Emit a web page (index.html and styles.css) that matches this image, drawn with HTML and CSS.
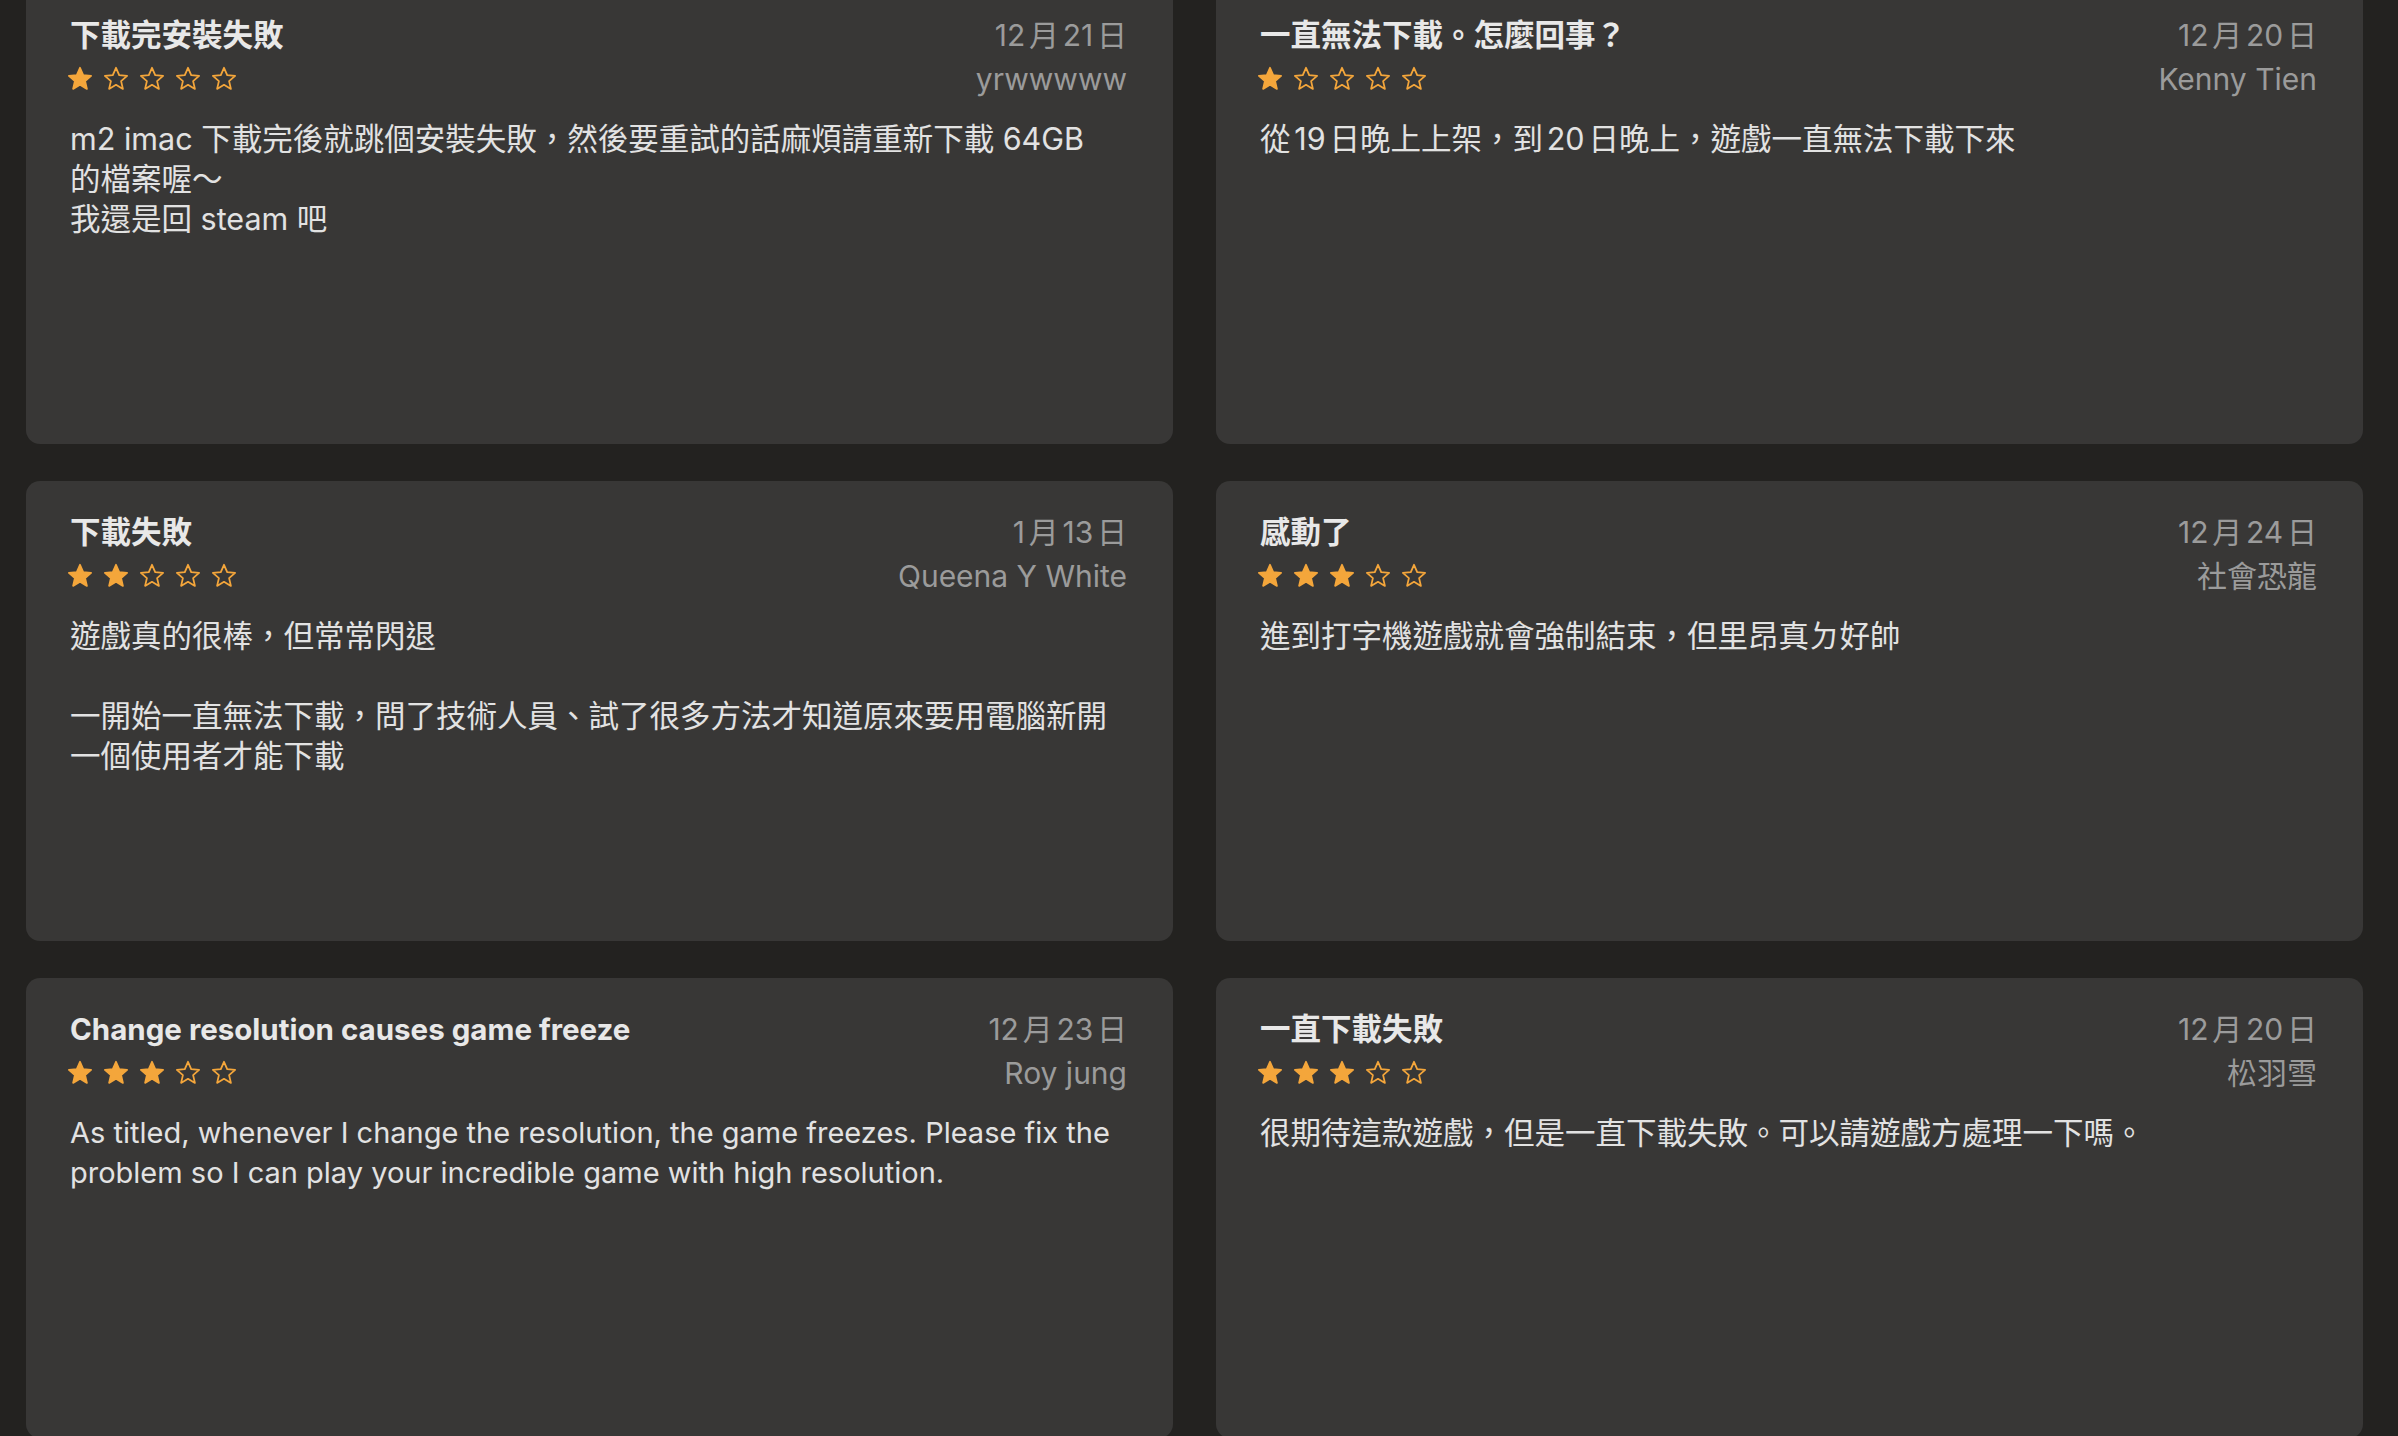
FILE: index.html
```html
<!DOCTYPE html>
<html lang="zh-Hant">
<head>
    <meta charset="UTF-8">
    <meta name="viewport" content="width=device-width, initial-scale=1.0">
    <title>評分及評論</title>
    <link rel="stylesheet" href="styles.css">
</head>
<body>
    <svg class="defs" width="0" height="0">
        <symbol id="star" viewBox="0 0 26 26">
            <path d="M13 1.8l3.2 7.3 7.9.7-6 5.3 1.8 7.8L13 18.8l-6.9 4.1 1.8-7.8-6-5.3 7.9-.7z"/>
        </symbol>
    </svg>

    <div class="reviews">
        <div class="review">
            <div class="review-head">
                <div class="review-left">
                    <div class="review-title">下載完安裝失敗</div>
                    <div class="stars">
                        <svg class="star full"><use href="#star"/></svg>
                        <svg class="star"><use href="#star"/></svg>
                        <svg class="star"><use href="#star"/></svg>
                        <svg class="star"><use href="#star"/></svg>
                        <svg class="star"><use href="#star"/></svg>
                    </div>
                </div>
                <div class="review-meta">
                    <div class="review-date">12月21日</div>
                    <div class="review-author">yrwwwww</div>
                </div>
            </div>
            <p class="review-body">m2 imac 下載完後就跳個安裝失敗，然後要重試的話麻煩請重新下載 64GB<br>的檔案喔～<br>我還是回 steam 吧</p>
        </div>

        <div class="review">
            <div class="review-head">
                <div class="review-left">
                    <div class="review-title">一直無法下載。怎麼回事？</div>
                    <div class="stars">
                        <svg class="star full"><use href="#star"/></svg>
                        <svg class="star"><use href="#star"/></svg>
                        <svg class="star"><use href="#star"/></svg>
                        <svg class="star"><use href="#star"/></svg>
                        <svg class="star"><use href="#star"/></svg>
                    </div>
                </div>
                <div class="review-meta">
                    <div class="review-date">12月20日</div>
                    <div class="review-author">Kenny Tien</div>
                </div>
            </div>
            <p class="review-body">從19日晚上上架，到20日晚上，遊戲一直無法下載下來</p>
        </div>

        <div class="review">
            <div class="review-head">
                <div class="review-left">
                    <div class="review-title">下載失敗</div>
                    <div class="stars">
                        <svg class="star full"><use href="#star"/></svg>
                        <svg class="star full"><use href="#star"/></svg>
                        <svg class="star"><use href="#star"/></svg>
                        <svg class="star"><use href="#star"/></svg>
                        <svg class="star"><use href="#star"/></svg>
                    </div>
                </div>
                <div class="review-meta">
                    <div class="review-date">1月13日</div>
                    <div class="review-author">Queena Y White</div>
                </div>
            </div>
            <p class="review-body">遊戲真的很棒，但常常閃退<br><br>一開始一直無法下載，問了技術人員、試了很多方法才知道原來要用電腦新開<br>一個使用者才能下載</p>
        </div>

        <div class="review">
            <div class="review-head">
                <div class="review-left">
                    <div class="review-title">感動了</div>
                    <div class="stars">
                        <svg class="star full"><use href="#star"/></svg>
                        <svg class="star full"><use href="#star"/></svg>
                        <svg class="star full"><use href="#star"/></svg>
                        <svg class="star"><use href="#star"/></svg>
                        <svg class="star"><use href="#star"/></svg>
                    </div>
                </div>
                <div class="review-meta">
                    <div class="review-date">12月24日</div>
                    <div class="review-author">社會恐龍</div>
                </div>
            </div>
            <p class="review-body">進到打字機遊戲就會強制結束，但里昂真ㄉ好帥</p>
        </div>

        <div class="review">
            <div class="review-head">
                <div class="review-left">
                    <div class="review-title" lang="en">Change resolution causes game freeze</div>
                    <div class="stars">
                        <svg class="star full"><use href="#star"/></svg>
                        <svg class="star full"><use href="#star"/></svg>
                        <svg class="star full"><use href="#star"/></svg>
                        <svg class="star"><use href="#star"/></svg>
                        <svg class="star"><use href="#star"/></svg>
                    </div>
                </div>
                <div class="review-meta">
                    <div class="review-date">12月23日</div>
                    <div class="review-author">Roy jung</div>
                </div>
            </div>
            <p class="review-body" lang="en">As titled, whenever I change the resolution, the game freezes. Please fix the problem so I can play your incredible game with high resolution.</p>
        </div>

        <div class="review">
            <div class="review-head">
                <div class="review-left">
                    <div class="review-title">一直下載失敗</div>
                    <div class="stars">
                        <svg class="star full"><use href="#star"/></svg>
                        <svg class="star full"><use href="#star"/></svg>
                        <svg class="star full"><use href="#star"/></svg>
                        <svg class="star"><use href="#star"/></svg>
                        <svg class="star"><use href="#star"/></svg>
                    </div>
                </div>
                <div class="review-meta">
                    <div class="review-date">12月20日</div>
                    <div class="review-author">松羽雪</div>
                </div>
            </div>
            <p class="review-body">很期待這款遊戲，但是一直下載失敗。可以請遊戲方處理一下嗎。</p>
        </div>
    </div>
</body>
</html>
```

FILE: styles.css
```css
html, body {
    height: 100%;
    overflow: hidden;
}
body {
    margin: 0;
    padding: 0 35px 0 26px;
    background-color: #232220;
    font-family: Inter, "Noto Sans CJK TC", sans-serif;
    color: #e3e3e3;
    text-autospace: normal;
}
.defs {
    position: absolute;
}
.reviews {
    display: grid;
    grid-template-columns: 1fr 1fr;
    grid-auto-rows: 460px;
    column-gap: 43px;
    row-gap: 37px;
    margin-top: -16px;
}
.review {
    background-color: #383736;
    border-radius: 14px;
    padding: 29px 46px 0 44px;
    overflow: hidden;
}
.review-head {
    display: flex;
    justify-content: space-between;
}
.review-title {
    font-size: 30.5px;
    font-weight: 700;
    line-height: 44px;
    color: #e8e8e8;
}
.review-title:lang(en) {
    font-size: 29.5px;
}
.stars {
    display: flex;
    gap: 10px;
    height: 44px;
    align-items: center;
    margin-left: -3px;
}
.star {
    width: 26px;
    height: 26px;
    fill: none;
    stroke: #f4a63b;
    stroke-width: 1.8;
    stroke-linejoin: round;
}
.star.full {
    fill: #f4a63b;
}
.review-meta {
    text-align: right;
    color: #9b9b9b;
    font-size: 30px;
    line-height: 44px;
}
.review-body {
    margin: 18px 0 0;
    max-width: 1085px;
    font-size: 30.5px;
    line-height: 40px;
    color: #e2e2e2;
}
.review-body:lang(en) {
    font-size: 29px;
}
```
